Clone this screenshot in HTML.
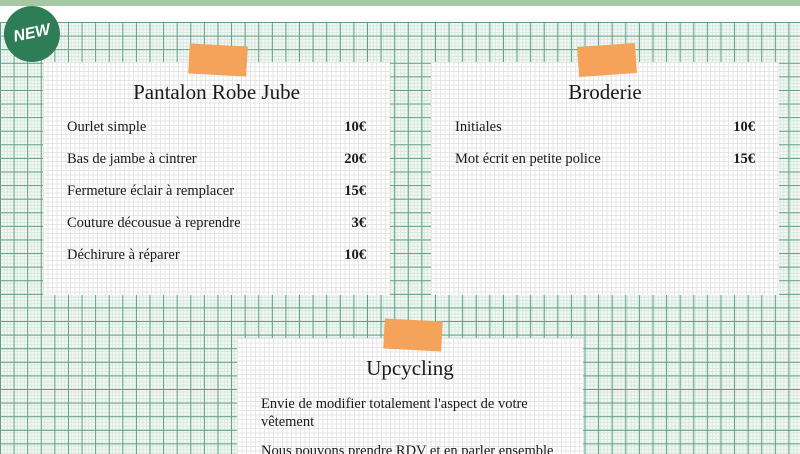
<!DOCTYPE html><html><head><style>
html,body{margin:0;width:800px;height:454px;overflow:hidden}
body{position:relative;background:#fff;font-family:"Liberation Serif","DejaVu Serif",serif;color:#1a1a1a}
.top{position:absolute;left:0;top:0;width:800px;height:6px;background:#a6c8a4}
.bg{position:absolute;left:0;top:22px;width:800px;height:432px;
background-image:linear-gradient(#5e9c86 1px,transparent 1px),linear-gradient(90deg,#5e9c86 1px,transparent 1px),linear-gradient(#d6e8df 1px,transparent 1px),linear-gradient(90deg,#d6e8df 1px,transparent 1px);
background-size:13.6px 13.6px,13.6px 13.6px,3.4px 3.4px,3.4px 3.4px;background-color:#f4f9f6}
.card{position:absolute;overflow:hidden;background-color:#fff;background-image:linear-gradient(#e6e6e6 1px,transparent 1px),linear-gradient(90deg,#e6e6e6 1px,transparent 1px);background-size:4.5px 4.5px}
.tape{position:absolute;background:#f5a25a;width:58px;height:30px}
h2{position:absolute;margin:0;width:100%;text-align:center;font-weight:normal;font-size:21px;top:18px}
.row{position:absolute;font-size:14.5px;left:24px;right:24px}
.row b{position:absolute;right:0;top:0}
.badge{position:absolute;left:6px;top:8px;width:52px;height:52px;border-radius:50%;background:#2e7d57;color:#fff;font:bold italic 16px "Liberation Sans",sans-serif;display:flex;align-items:center;justify-content:center;transform:rotate(-12deg);box-shadow:0 0 0 2px #2e7d57}
</style></head><body>
<div class="top"></div><div class="bg"></div>
<div class="card" style="left:43px;top:62px;width:347px;height:233px">
<h2>Pantalon Robe Jube</h2>
<div class="row" style="top:57px">Ourlet simple<b>10€</b></div>
<div class="row" style="top:89px">Bas de jambe à cintrer<b>20€</b></div>
<div class="row" style="top:121px">Fermeture éclair à remplacer<b>15€</b></div>
<div class="row" style="top:153px">Couture décousue à reprendre<b>3€</b></div>
<div class="row" style="top:185px">Déchirure à réparer<b>10€</b></div>
</div>
<div class="tape" style="left:189px;top:45px;transform:rotate(3deg)"></div>
<div class="card" style="left:431px;top:62px;width:348px;height:233px">
<h2>Broderie</h2>
<div class="row" style="top:57px">Initiales<b>10€</b></div>
<div class="row" style="top:89px">Mot écrit en petite police<b>15€</b></div>
</div>
<div class="tape" style="left:578px;top:45px;transform:rotate(-4deg)"></div>
<div class="card" style="left:237px;top:338px;width:346px;height:116px">
<h2>Upcycling</h2>
<div class="row" style="top:57px;line-height:18px;right:20px">Envie de modifier totalement l'aspect de votre vêtement</div>
<div class="row" style="top:105px;white-space:nowrap">Nous pouvons prendre RDV et en parler ensemble</div>
</div>
<div class="tape" style="left:384px;top:320px;transform:rotate(3deg)"></div>
<div class="badge">NEW</div>
</body></html>
